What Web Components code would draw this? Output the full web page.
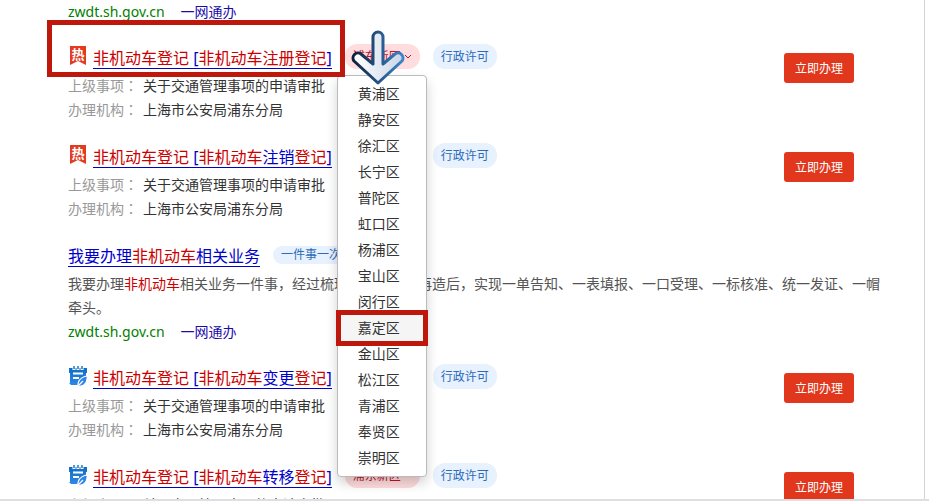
<!DOCTYPE html>
<html lang="zh-CN">
<head>
<meta charset="utf-8">
<title>一网通办</title>
<style>
  html, body { height: 100%; }
  body {
    margin: 0;
    background: #fff;
    color: #333;
    font-family: "Noto Sans", "Noto Sans CJK SC", sans-serif;
    font-size: 14px;
  }
</style>
</head>
<body>
<result-page>
  <source-line></source-line>
  <service-item kind="hot" open>
    <em>非机动车登记</em> [<em>非机动车注册登记</em>]
  </service-item>
  <service-item kind="hot">
    <em>非机动车登记</em> [<em>非机动车</em>注销<em>登记</em>]
  </service-item>
  <guide-item></guide-item>
  <service-item kind="doc">
    <em>非机动车登记</em> [<em>非机动车</em>变更<em>登记</em>]
  </service-item>
  <service-item kind="doc">
    <em>非机动车登记</em> [<em>非机动车</em>转移<em>登记</em>]
  </service-item>
</result-page>

<script>
'use strict';
(function() {

  const DISTRICTS = ['黄浦区', '静安区', '徐汇区', '长宁区', '普陀区', '虹口区', '杨浦区',
    '宝山区', '闵行区', '嘉定区', '金山区', '松江区', '青浦区', '奉贤区', '崇明区'];

  const ICONS = {
    hot: `
      <svg viewBox="0 0 20 22" width="20" height="22" aria-hidden="true">
        <path d="M2 1h16v19l-8-4-8 4z" fill="#e33a20"/>
        <text x="10" y="14" font-size="13" font-weight="700" fill="#fff" text-anchor="middle">热</text>
      </svg>`,
    doc: `
      <svg viewBox="0 0 20 22" width="20" height="22" aria-hidden="true">
        <defs>
          <linearGradient id="blue" x1="0" y1="0" x2="0" y2="1">
            <stop offset="0" stop-color="#0c6fc4"/>
            <stop offset="1" stop-color="#2f86e8"/>
          </linearGradient>
        </defs>
        <path d="M1 3h18v5h-1v5l-7 7H3l-2-2h1V8H1z" fill="url(#blue)"/>
        <path d="M6 2v3M10 2v3M14 2v3" stroke="#fff" stroke-width="3"/>
        <path d="M6 1v3M10 1v3M14 1v3" stroke="#0c6fc4" stroke-width="1.4"/>
        <path d="M5 8.5h10M5 13h6" stroke="#fff" stroke-width="1.8"/>
        <path d="M19.500 11c-4 0-8 3-9 6l-1 4.500c5 0 8-2 9-5z" fill="#2f86e8" stroke="#fff" stroke-width="1.200"/>
        <path d="M10 21l5-5" stroke="#fff" stroke-width="1.200"/>
      </svg>`,
  };

  // shared by both kinds of result
  const TITLE_STYLES = `
    .head { display: flex; align-items: center; height: 32px; }
    .title {
      color: #00c;
      font-size: 16px;
      line-height: 20px;
      white-space: nowrap;
      text-decoration: none;
      border-bottom: 1px solid #00c;
    }
    em, ::slotted(em) { color: #c00; font-style: normal; }
  `;

  class ResultPage extends HTMLElement {
    constructor() {
      super();
      this.attachShadow({mode: 'open'}).innerHTML = `
        <style>
          :host {
            display: block;
            height: 100vh;
            box-sizing: border-box;
            overflow: hidden;
            position: relative;
          }
          main {
            min-height: 100%;
            box-sizing: border-box;
            display: flex;
            flex-direction: column;
            gap: 19px;
            margin-right: 4px;
            padding: 0 35px 0 68px;
            border-right: 1px solid #d3d3d6;
          }
          .edge {
            position: absolute;
            left: 0;
            right: 0;
            bottom: 0;
            height: 2px;
            background: #dfdfe3;
          }
        </style>
        <main><slot></slot></main>
        <div class="edge"></div>
      `;
    }
  }

  class SourceLine extends HTMLElement {
    constructor() {
      super();
      this.attachShadow({mode: 'open'}).innerHTML = `
        <style>
          :host { display: flex; gap: 16px; line-height: 23px; }
          span { color: #008000; }
          a { color: #1a0dab; text-decoration: none; }
        </style>
        <span>zwdt.sh.gov.cn</span><a href="#">一网通办</a>
      `;
    }
  }

  class TagPill extends HTMLElement {
    constructor() {
      super();
      this.attachShadow({mode: 'open'}).innerHTML = `
        <style>
          :host {
            display: block;
            padding: 0 8px;
            border-radius: 12px;
            background: #e8f1fe;
            color: #2c6cb8;
            font-size: 12px;
            line-height: 25px;
            white-space: nowrap;
          }
          :host([compact]) { line-height: 18px; }
        </style>
        <slot></slot>
      `;
    }
  }

  /**
   * Pill button with the list of districts under it.
   */
  class DistrictPicker extends HTMLElement {
    constructor() {
      super();
      this.attachShadow({mode: 'open'}).innerHTML = `
        <style>
          :host { display: block; position: relative; }
          button {
            display: flex;
            align-items: center;
            gap: 3px;
            padding: 0 8px;
            border: 0;
            border-radius: 12px;
            background: #ffdcdd;
            color: #c8102e;
            font: inherit;
            font-size: 12px;
            line-height: 25px;
            white-space: nowrap;
          }
          ul {
            display: none;
            position: absolute;
            z-index: 2;
            top: 31px;
            left: -8px;
            margin: 0;
            padding: 5px 0;
            border: 1px solid #bbb;
            border-radius: 4px;
            background: #fff;
            box-shadow: 0 6px 12px rgba(0, 0, 0, .18);
            list-style: none;
          }
          :host([open]) ul { display: block; }
          li {
            padding: 0 26px 0 20px;
            line-height: 26px;
            white-space: nowrap;
          }
          li.current { position: relative; background: #f5f5f5; }
          li.current::after {
            content: "";
            position: absolute;
            inset: -5px -2px;
            border: 5px solid #bd180b;
          }
          .pointer {
            display: none;
            position: absolute;
            z-index: 3;
            left: 6px;
            top: -14px;
          }
          :host([open]) .pointer { display: block; }
        </style>
        <button type="button">浦东新区
          <svg width="8" height="6" viewBox="0 0 8 6" fill="none" stroke="#c8102e"><path d="M1 1l3 3 3-3"/></svg>
        </button>
        <ul></ul>
        <svg class="pointer" width="54" height="56" viewBox="0 0 54 56" aria-hidden="true">
          <defs>
            <linearGradient id="rim"><stop offset="0" stop-color="#0c1f3d"/><stop offset="1" stop-color="#3f86cc"/></linearGradient>
            <linearGradient id="fill"><stop offset="0" stop-color="#fff"/><stop offset="1" stop-color="#c9d6e6"/></linearGradient>
          </defs>
          <path d="M22 7a5 5 0 0 1 10 0v27l12-10a5 5 0 0 1 7 7L27 53 3 31a5 5 0 0 1 7-7l12 10z"
            fill="url(#fill)" stroke="url(#rim)" stroke-width="3" stroke-linejoin="round"/>
        </svg>
      `;
      let list = this.shadowRoot.querySelector('ul');
      for (let name of DISTRICTS) {
        let li = document.createElement('li');
        li.textContent = name;
        li.classList.toggle('current', name === '嘉定区');
        list.appendChild(li);
      }
      this.shadowRoot.querySelector('button').addEventListener('click', () => {
        this.toggleAttribute('open');
      });
    }
  }

  class ServiceItem extends HTMLElement {
    connectedCallback() {
      let open = this.hasAttribute('open');
      this.attachShadow({mode: 'open'}).innerHTML = `
        <style>
          ${TITLE_STYLES}
          :host { display: flex; align-items: flex-start; }
          .main { flex: 1; }
          .marked { display: flex; align-items: center; gap: 5px; position: relative; }
          .marked svg { margin-bottom: 4px; }
          :host([open]) .marked::after {
            content: "";
            position: absolute;
            z-index: 4;
            inset: -25px -13px -6px -21px;
            border: 5px solid #bd180b;
          }
          .tags { display: flex; gap: 13px; margin: 0 0 3px 13px; }
          dl { display: grid; grid-template-columns: auto 1fr; column-gap: 5px; margin: 0; line-height: 24px; }
          dt { color: #999; }
          /* this face has the colon in the middle of its box */
          dt span { font-family: "Noto Sans CJK TC", sans-serif; line-height: 1; }
          dd { margin: 0; }
          .apply {
            width: 70px;
            height: 30px;
            margin: 11px 35px 0 0;
            padding: 0;
            border: 0;
            border-radius: 3px;
            background: #e1371c;
            color: #fff;
            font: inherit;
            font-size: 12px;
          }
        </style>
        <div class="main">
          <div class="head">
            <div class="marked">${ICONS[this.getAttribute('kind')]}<a class="title" href="#"><slot></slot></a></div>
            <div class="tags">
              <district-picker${open ? ' open' : ''}></district-picker>
              <tag-pill>行政许可</tag-pill>
            </div>
          </div>
          <dl>
            <dt>上级事项<span lang="zh-TW">：</span></dt><dd>关于交通管理事项的申请审批</dd>
            <dt>办理机构<span lang="zh-TW">：</span></dt><dd>上海市公安局浦东分局</dd>
          </dl>
        </div>
        <button class="apply" type="button">立即办理</button>
      `;
    }
  }

  class GuideItem extends HTMLElement {
    constructor() {
      super();
      this.attachShadow({mode: 'open'}).innerHTML = `
        <style>
          ${TITLE_STYLES}
          :host { display: block; }
          tag-pill { margin: 0 0 3px 13px; }
          p { margin: 0; color: #555; line-height: 24px; }
        </style>
        <div class="head">
          <a class="title" href="#">我要办理<em>非机动车</em>相关业务</a>
          <tag-pill compact>一件事一次办</tag-pill>
        </div>
        <p>我要办理<em>非机动车</em>相关业务一件事，经过梳理、流程优化再造后，实现一单告知、一表填报、一口受理、一标核准、统一发证、一帽牵头。</p>
        <source-line></source-line>
      `;
    }
  }

  customElements.define('result-page', ResultPage);
  customElements.define('source-line', SourceLine);
  customElements.define('tag-pill', TagPill);
  customElements.define('district-picker', DistrictPicker);
  customElements.define('service-item', ServiceItem);
  customElements.define('guide-item', GuideItem);

})();
</script>
</body>
</html>
